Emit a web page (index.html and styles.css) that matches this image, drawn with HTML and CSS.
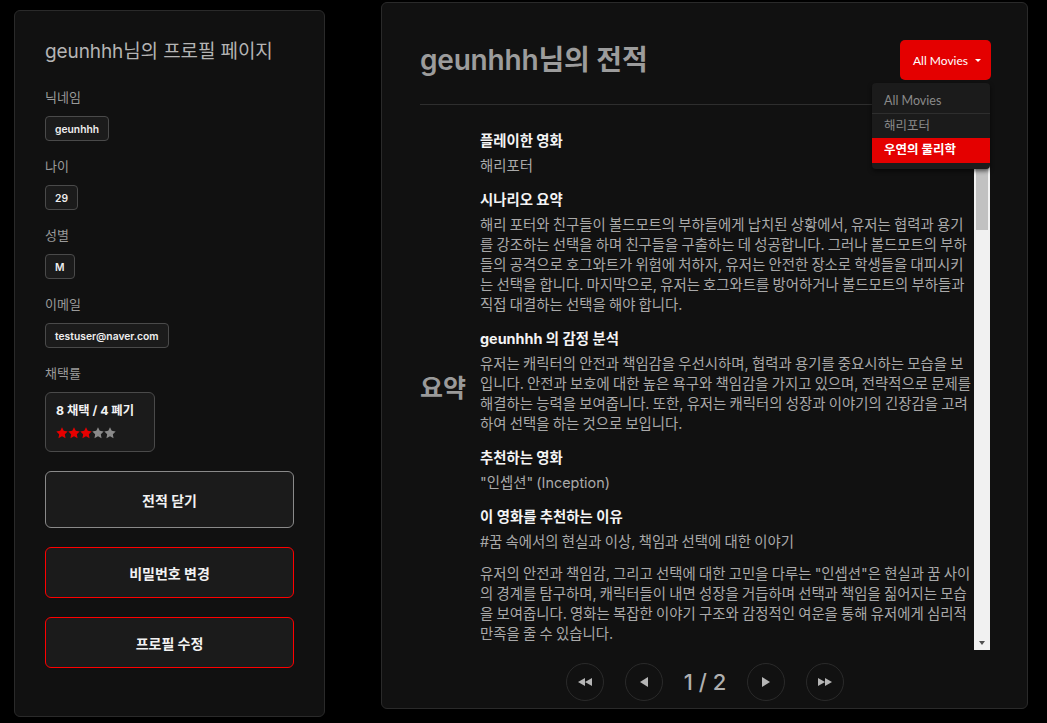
FILE: index.html
```html
<!DOCTYPE html>
<html lang="ko">
<head>
<meta charset="utf-8">
<title>geunhhh님의 프로필 페이지</title>
<link rel="stylesheet" href="styles.css">
</head>
<body>
<div class="page">
  <aside class="profile-card">
    <h1 class="profile-title">geunhhh님의 프로필 페이지</h1>
    <div class="field first">
      <div class="field-label">닉네임</div>
      <span class="chip">geunhhh</span>
    </div>
    <div class="field">
      <div class="field-label">나이</div>
      <span class="chip">29</span>
    </div>
    <div class="field">
      <div class="field-label">성별</div>
      <span class="chip">M</span>
    </div>
    <div class="field">
      <div class="field-label">이메일</div>
      <span class="chip">testuser@naver.com</span>
    </div>
    <div class="field">
      <div class="field-label">채택률</div>
      <div class="rate-box">
        <div class="rate-text">8 채택 / 4 폐기</div>
        <div class="stars">
          <svg class="star on" viewBox="1 1 22 22"><path d="M12 1.5l3.2 6.6 7.2 1-5.2 5.1 1.3 7.2L12 18l-6.5 3.4 1.3-7.2-5.2-5.1 7.2-1z"/></svg>
          <svg class="star on" viewBox="1 1 22 22"><path d="M12 1.5l3.2 6.6 7.2 1-5.2 5.1 1.3 7.2L12 18l-6.5 3.4 1.3-7.2-5.2-5.1 7.2-1z"/></svg>
          <svg class="star on" viewBox="1 1 22 22"><path d="M12 1.5l3.2 6.6 7.2 1-5.2 5.1 1.3 7.2L12 18l-6.5 3.4 1.3-7.2-5.2-5.1 7.2-1z"/></svg>
          <svg class="star off" viewBox="1 1 22 22"><path d="M12 1.5l3.2 6.6 7.2 1-5.2 5.1 1.3 7.2L12 18l-6.5 3.4 1.3-7.2-5.2-5.1 7.2-1z"/></svg>
          <svg class="star off" viewBox="1 1 22 22"><path d="M12 1.5l3.2 6.6 7.2 1-5.2 5.1 1.3 7.2L12 18l-6.5 3.4 1.3-7.2-5.2-5.1 7.2-1z"/></svg>
        </div>
      </div>
    </div>
    <div class="actions">
      <button class="btn btn-outline btn-tall">전적 닫기</button>
      <button class="btn btn-danger">비밀번호 변경</button>
      <button class="btn btn-danger">프로필 수정</button>
    </div>
  </aside>

  <main class="record-card">
    <header class="record-header">
      <h2 class="record-title">geunhhh님의 전적</h2>
      <div class="dropdown">
        <button class="dropdown-toggle">All Movies<span class="caret"></span></button>
        <ul class="dropdown-menu">
          <li class="dropdown-item muted">All Movies</li>
          <li class="dropdown-item">해리포터</li>
          <li class="dropdown-item active">우연의 물리학</li>
        </ul>
      </div>
    </header>

    <div class="record-body">
      <div class="record-scroll">
        <section class="record-row">
          <div class="row-label">요약</div>
          <div class="row-body">
            <h3 class="item-title">플레이한 영화</h3>
            <p class="item-text">해리포터</p>
            <h3 class="item-title">시나리오 요약</h3>
            <p class="item-text">해리 포터와 친구들이 볼드모트의 부하들에게 납치된 상황에서, 유저는 협력과 용기를 강조하는 선택을 하며 친구들을 구출하는 데 성공합니다. 그러나 볼드모트의 부하들의 공격으로 호그와트가 위험에 처하자, 유저는 안전한 장소로 학생들을 대피시키는 선택을 합니다. 마지막으로, 유저는 호그와트를 방어하거나 볼드모트의 부하들과 직접 대결하는 선택을 해야 합니다.</p>
            <h3 class="item-title">geunhhh 의 감정 분석</h3>
            <p class="item-text">유저는 캐릭터의 안전과 책임감을 우선시하며, 협력과 용기를 중요시하는 모습을 보입니다. 안전과 보호에 대한 높은 욕구와 책임감을 가지고 있으며, 전략적으로 문제를 해결하는 능력을 보여줍니다. 또한, 유저는 캐릭터의 성장과 이야기의 긴장감을 고려하여 선택을 하는 것으로 보입니다.</p>
            <h3 class="item-title">추천하는 영화</h3>
            <p class="item-text">"인셉션" (Inception)</p>
            <h3 class="item-title">이 영화를 추천하는 이유</h3>
            <p class="item-text">#꿈 속에서의 현실과 이상, 책임과 선택에 대한 이야기</p>
            <p class="item-text spaced">유저의 안전과 책임감, 그리고 선택에 대한 고민을 다루는 "인셉션"은 현실과 꿈 사이의 경계를 탐구하며, 캐릭터들이 내면 성장을 거듭하며 선택과 책임을 짊어지는 모습을 보여줍니다. 영화는 복잡한 이야기 구조와 감정적인 여운을 통해 유저에게 심리적 만족을 줄 수 있습니다.</p>
          </div>
        </section>
      </div>
      <div class="scrollbar" aria-hidden="true">
        <span class="sb-btn sb-up"></span>
        <span class="sb-track"><span class="sb-thumb"></span></span>
        <span class="sb-btn sb-down"></span>
      </div>
    </div>

    <nav class="pager">
      <button class="pager-btn" aria-label="처음">
        <svg width="14" height="8" viewBox="0 0 14 8"><path d="M7 0L0 4l7 4zM14 0L7 4l7 4z"/></svg>
      </button>
      <button class="pager-btn" aria-label="이전">
        <svg width="8" height="10" viewBox="0 0 8 10"><path d="M8 0L0 5l8 5z"/></svg>
      </button>
      <span class="pager-text">1 / 2</span>
      <button class="pager-btn" aria-label="다음">
        <svg width="8" height="10" viewBox="0 0 8 10"><path d="M0 0l8 5-8 5z"/></svg>
      </button>
      <button class="pager-btn" aria-label="마지막">
        <svg width="14" height="8" viewBox="0 0 14 8"><path d="M0 0l7 4-7 4zM7 0l7 4-7 4z"/></svg>
      </button>
    </nav>
  </main>
</div>
</body>
</html>
```

FILE: styles.css
```css
* { box-sizing: border-box; }

html, body {
  margin: 0;
  background: #000;
  font-family: Inter, "Noto Sans CJK KR", sans-serif;
  color: #e8e8e8;
}

.page {
  display: flex;
  align-items: flex-start;
  gap: 56px;
  padding: 2px 19px 0 14px;
}

/* ---------- left profile card ---------- */
.profile-card {
  width: 311px;
  height: 707px;
  margin-top: 8px;
  background: #111;
  border: 1px solid #2a2a2a;
  border-radius: 6px;
  padding: 29px 30px 0 30px;
}

.profile-title {
  margin: 0;
  font-size: 19px;
  line-height: 24px;
  font-weight: 400;
  color: #b4b4b4;
  letter-spacing: -0.1px;
}

.field { margin-top: 17px; }
.field.first { margin-top: 25px; }

.field-label {
  font-size: 13px;
  line-height: 16px;
  color: #9a9a9a;
  margin-bottom: 11px;
}

.chip {
  display: inline-flex;
  align-items: center;
  height: 25px;
  padding: 0 9px;
  border: 1px solid #4a4a4a;
  border-radius: 4px;
  background: #1b1b1b;
  font-size: 10.3px;
  font-weight: 600;
  color: #eee;
}

.rate-box {
  width: 110px;
  height: 60px;
  border: 1px solid #4a4a4a;
  border-radius: 6px;
  background: #1b1b1b;
  padding: 9px 10px 0 10px;
}

.rate-text {
  font-size: 12.3px;
  line-height: 17px;
  font-weight: 700;
  color: #f2f2f2;
}

.stars {
  display: flex;
  margin-top: 8px;
}

.star {
  width: 12px;
  height: 12px;
  display: block;
}
.star.on { fill: #e60000; }
.star.off { fill: #8a8a8a; }

.actions {
  display: flex;
  flex-direction: column;
  gap: 19px;
  margin-top: 19px;
}

.btn {
  width: 100%;
  height: 51px;
  background: #1b1b1b;
  border-radius: 6px;
  font-family: Inter, "Noto Sans CJK KR", sans-serif;
  font-size: 14px;
  font-weight: 700;
  color: #f2f2f2;
  cursor: pointer;
}
.btn-tall { height: 57px; }
.btn-outline { border: 1px solid #8a8a8a; }
.btn-danger { border: 1px solid #ff0000; }

/* ---------- right record card ---------- */
.record-card {
  width: 647px;
  height: 707px;
  background: #111;
  border: 1px solid #2a2a2a;
  border-radius: 6px;
  padding: 0 37px 0 38px;
  display: flex;
  flex-direction: column;
}

.record-header {
  display: flex;
  align-items: center;
  justify-content: space-between;
  padding: 37px 0 24px;
  border-bottom: 1px solid #2e2e2e;
}

.record-title {
  margin: 0;
  font-size: 28px;
  line-height: 40px;
  font-weight: 600;
  color: #9c9c9c;
  letter-spacing: -0.2px;
}

.dropdown {
  position: relative;
  margin-right: -1px;
}

.dropdown-toggle {
  display: flex;
  align-items: center;
  width: 91px;
  height: 40px;
  padding: 0 0 0 13px;
  background: #e40000;
  border: none;
  border-radius: 5px;
  font-family: Lato, "Noto Sans CJK KR", sans-serif;
  font-size: 12px;
  color: #fff;
}

.caret {
  width: 0;
  height: 0;
  margin-left: 7px;
  border-left: 3px solid transparent;
  border-right: 3px solid transparent;
  border-top: 3px solid #fff;
}

.dropdown-menu {
  position: absolute;
  z-index: 5;
  top: 43px;
  right: 1px;
  width: 118px;
  margin: 0;
  padding: 5px 0 6px;
  list-style: none;
  background: #1b1b1b;
  border-radius: 4px;
  box-shadow: 0 2px 4px rgba(0, 0, 0, 0.6);
}

.dropdown-item {
  height: 25px;
  line-height: 25px;
  padding: 0 12px;
  font-family: Lato, "Noto Sans CJK KR", sans-serif;
  font-size: 12.5px;
  color: #8a8a8a;
}
.dropdown-item + .dropdown-item { border-top: 1px solid #2e2e2e; line-height: 24px; }
.dropdown-item.active {
  background: #e40000;
  color: #fff;
  font-weight: 700;
  border-top: none;
}

/* ---------- scroll area ---------- */
.record-body {
  display: flex;
  height: 545px;
}

.record-scroll {
  flex: 1;
  min-width: 0;
  overflow: hidden;
}

.scrollbar {
  width: 16px;
  flex: none;
  display: flex;
  flex-direction: column;
  background: #f1f1f1;
}

.sb-btn {
  height: 15px;
  flex: none;
  display: flex;
  align-items: center;
  justify-content: center;
}
.sb-up::before {
  content: "";
  border-left: 3.5px solid transparent;
  border-right: 3.5px solid transparent;
  border-bottom: 4px solid #505050;
}
.sb-down::before {
  content: "";
  border-left: 3.5px solid transparent;
  border-right: 3.5px solid transparent;
  border-top: 4px solid #505050;
}

.sb-track {
  flex: 1;
  padding: 0 2px;
}
.sb-thumb {
  display: block;
  height: 110px;
  background: #c1c1c1;
}

.record-row {
  display: flex;
  align-items: center;
  gap: 15px;
  padding: 26px 0 27px;
}

.row-label {
  width: 45px;
  flex: none;
  font-size: 25px;
  font-weight: 700;
  color: #9a9a9a;
  line-height: 32px;
  white-space: nowrap;
}

.row-body {
  flex: 1;
  min-width: 0;
  padding-right: 1px;
}

.item-title {
  margin: 14px 0 0;
  font-size: 14.4px;
  line-height: 20px;
  font-weight: 700;
  color: #f4f4f4;
}
.item-title:first-child { margin-top: 0; }

.item-text {
  margin: 5px 0 0;
  font-size: 14.4px;
  line-height: 20px;
  word-spacing: -0.8px;
  color: #a9a9a9;
}
.item-text.spaced { margin-top: 12px; }

/* ---------- pager ---------- */
.pager {
  display: flex;
  align-items: center;
  justify-content: center;
  gap: 21px;
  margin-top: 13px;
}

.pager-btn {
  width: 38px;
  height: 38px;
  border-radius: 50%;
  border: 1px solid #2a2a2a;
  background: transparent;
  display: flex;
  align-items: center;
  justify-content: center;
  padding: 0;
}
.pager-btn svg { fill: #b5b5b5; display: block; }

.pager-text {
  font-size: 22px;
  font-weight: 500;
  color: #b0b0b0;
  line-height: 30px;
}
```
